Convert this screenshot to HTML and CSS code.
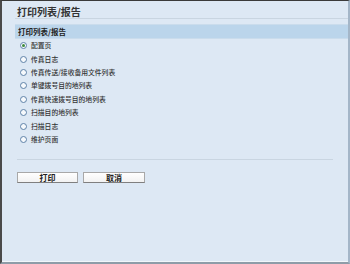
FILE: index.html
```html
<!DOCTYPE html>
<html lang="zh-CN">
<head>
<meta charset="utf-8">
<title>打印列表/报告</title>
<link rel="stylesheet" href="styles.css">
</head>
<body>
<div class="frame">
  <div class="content">
    <h1 class="title">打印列表/报告</h1>
    <div class="section-head">打印列表/报告</div>
    <ul class="options">
      <li class="option"><span class="radio checked"></span><span class="label">配置页</span></li>
      <li class="option"><span class="radio"></span><span class="label">传真日志</span></li>
      <li class="option"><span class="radio"></span><span class="label">传真传送/接收备用文件列表</span></li>
      <li class="option"><span class="radio"></span><span class="label">单键拨号目的地列表</span></li>
      <li class="option"><span class="radio"></span><span class="label">传真快速拨号目的地列表</span></li>
      <li class="option"><span class="radio"></span><span class="label">扫描目的地列表</span></li>
      <li class="option"><span class="radio"></span><span class="label">扫描日志</span></li>
      <li class="option"><span class="radio"></span><span class="label">维护页面</span></li>
    </ul>
    <div class="divider"></div>
    <div class="actions">
      <button class="btn btn-print">打印</button>
      <button class="btn btn-cancel">取消</button>
    </div>
  </div>
</div>
</body>
</html>
```

FILE: styles.css
```css
html, body {
  margin: 0;
  padding: 0;
}
body {
  font-family: "Noto Sans CJK SC", "Liberation Sans", sans-serif;
  background: #dde8f4;
}
.frame {
  box-sizing: border-box;
  width: 350px;
  height: 264px;
  background: #dde8f4;
  border-top: 1px solid #3a3a3a;
  border-left: 2px solid #4a4a4a;
  border-right: 2px solid #a4b6c8;
  border-bottom: 2px solid #8e9ca8;
  box-shadow: inset 0 -1px 0 #f2f6fa;
}
.content {
  display: flex;
  flex-direction: column;
  padding-left: 13px;
}
.title {
  margin: 0;
  padding: 4px 0 0 2px;
  height: 13px;
  line-height: 13px;
  font-size: 10px;
  font-weight: 600;
  color: #333;
  border-bottom: 1px solid #c9d5e1;
}
.section-head {
  margin-top: 5px;
  box-sizing: border-box;
  height: 15px;
  line-height: 13px;
  padding-left: 3px;
  background: #bbd5eb;
  border-top: 1px solid #cadcec;
  border-bottom: 1px solid #cadcec;
  font-size: 7.5px;
  font-weight: bold;
  color: #222;
}
.options {
  list-style: none;
  margin: 0;
  padding: 0;
}
.option {
  display: flex;
  align-items: center;
  height: 13.4px;
  padding-left: 5px;
}
.radio {
  box-sizing: border-box;
  width: 7px;
  height: 7px;
  border-radius: 50%;
  border: 1px solid #5f82a8;
  background: #f6f9fc;
  display: flex;
  align-items: center;
  justify-content: center;
  flex: none;
}
.radio.checked::after {
  content: "";
  width: 3px;
  height: 3px;
  border-radius: 50%;
  background: #3f8a3c;
}
.label {
  margin-left: 4px;
  font-size: 6.8px;
  font-weight: 500;
  line-height: 9px;
  color: #333;
}
.divider {
  margin-top: 13px;
  margin-left: 2px;
  margin-right: 15px;
  height: 0;
  border-top: 1px solid #c9d5e1;
}
.actions {
  display: flex;
  gap: 5px;
  margin-top: 12px;
  margin-left: 2px;
}
.btn {
  box-sizing: border-box;
  height: 11px;
  padding: 0;
  margin: 0;
  font-family: "Noto Sans CJK SC", "Liberation Sans", sans-serif;
  font-size: 8px;
  font-weight: bold;
  line-height: 9px;
  color: #222;
  background: linear-gradient(#ffffff, #f2f2f2);
  border: 1px solid #a8a8a8;
  border-bottom-color: #7f7f7f;
  border-radius: 0;
}
.btn-print {
  width: 61px;
}
.btn-cancel {
  width: 62px;
}
```
